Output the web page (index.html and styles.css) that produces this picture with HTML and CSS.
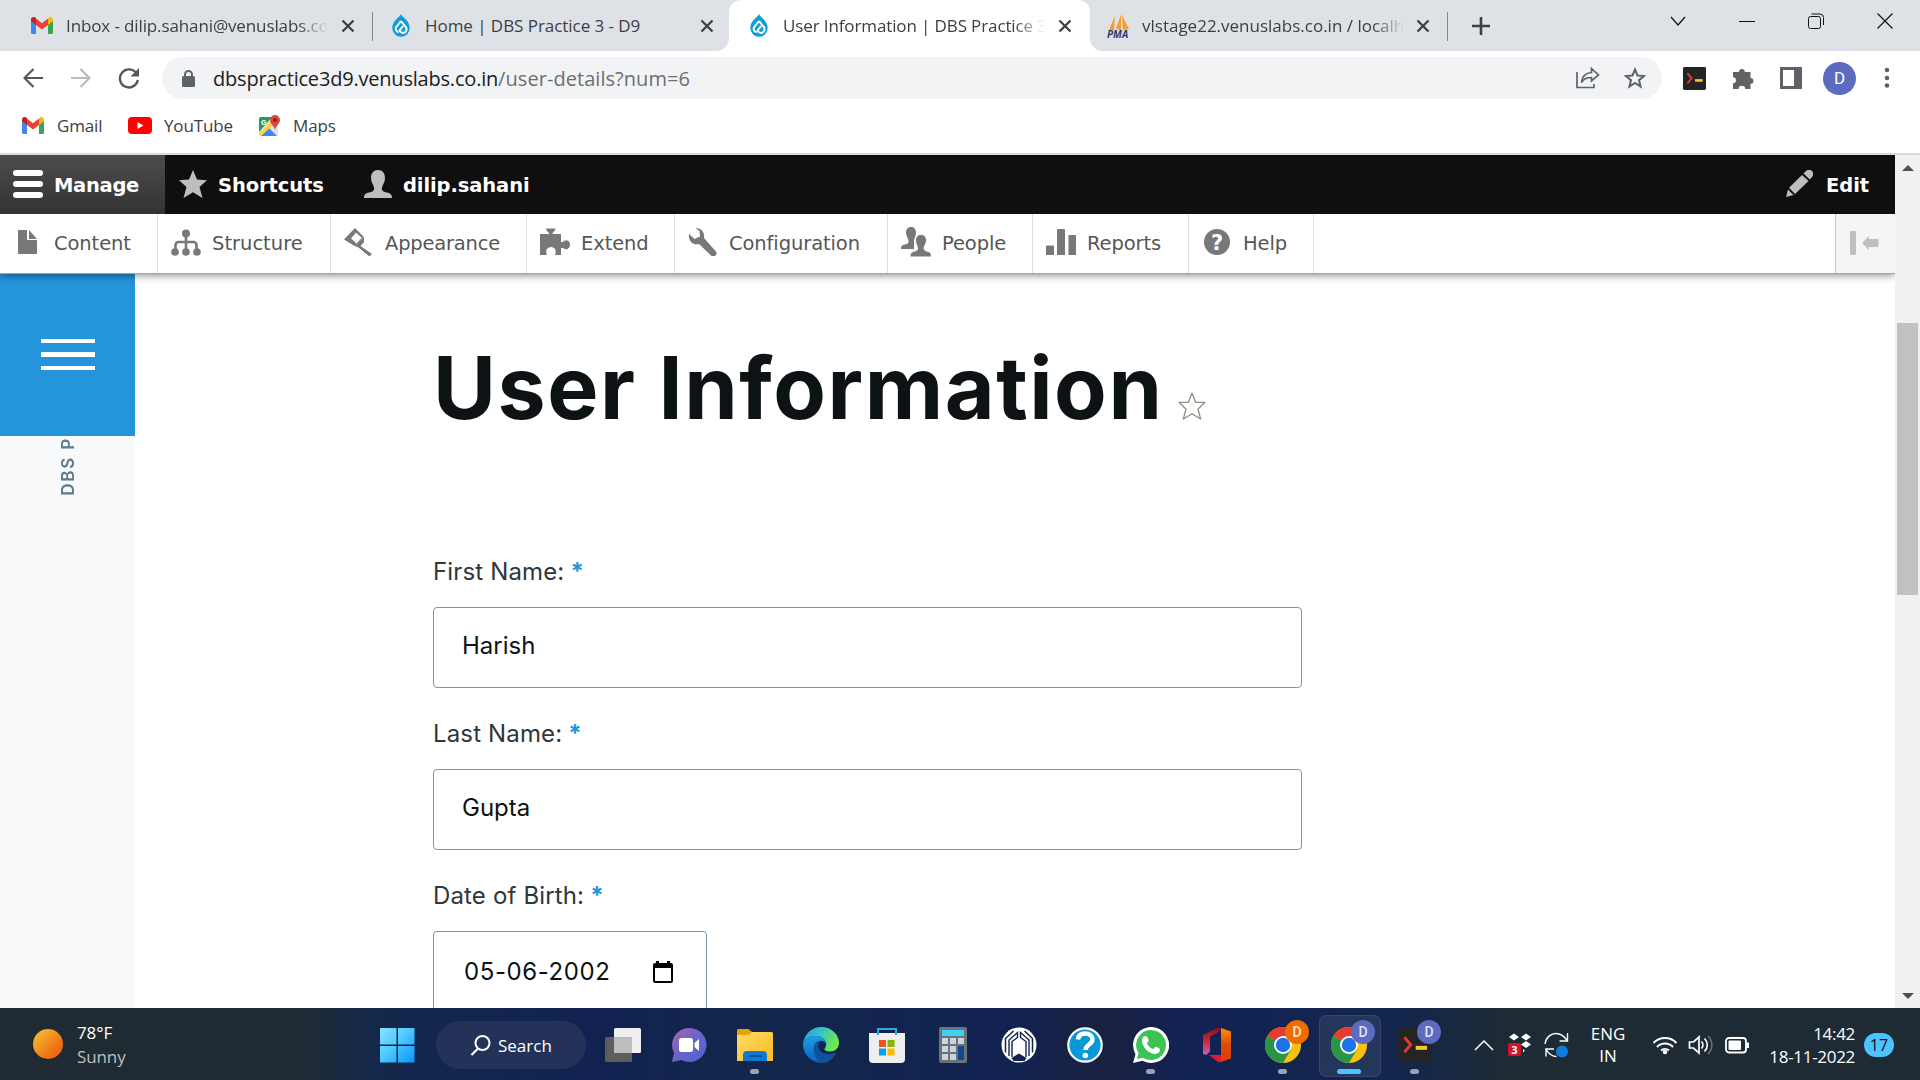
FILE: index.html
```html
<!DOCTYPE html>
<html lang="en">
<head>
<meta charset="utf-8">
<title>User Information | DBS Practice 3 - D9</title>
<link rel="stylesheet" href="styles.css">
</head>
<body>
<svg class="defs" width="0" height="0" aria-hidden="true">
  <defs>
    <linearGradient id="gSun" x1="0" y1="0" x2="1" y2="1"><stop offset=".1" stop-color="#f3ba32"/><stop offset=".75" stop-color="#ef6c10"/></linearGradient>
    <linearGradient id="gWin" x1="0" y1="0" x2="1" y2="1"><stop offset="0" stop-color="#8be0ff"/><stop offset=".45" stop-color="#4fcbfd"/><stop offset="1" stop-color="#0a95f8"/></linearGradient>
    <linearGradient id="gChat" x1="0" y1="0" x2="1" y2="1"><stop offset="0" stop-color="#a168ae"/><stop offset=".5" stop-color="#6a64c8"/><stop offset="1" stop-color="#4b62d8"/></linearGradient>
    <linearGradient id="gFolder" x1="0" y1="0" x2="1" y2="1"><stop offset="0" stop-color="#ffd86b"/><stop offset="1" stop-color="#fbbc1c"/></linearGradient>
    <linearGradient id="gEdgeTop" x1="0" y1="0" x2="1" y2=".4"><stop offset="0" stop-color="#1f9ddb"/><stop offset=".5" stop-color="#35c3c9"/><stop offset="1" stop-color="#6bea4c"/></linearGradient>
    <linearGradient id="gEdge" x1="0" y1="0" x2="0" y2="1"><stop offset="0" stop-color="#1aa0e4"/><stop offset="1" stop-color="#0d5fbd"/></linearGradient>
    <linearGradient id="gOffR" x1="0" y1="0" x2="0" y2="1"><stop offset="0" stop-color="#fd8f0c"/><stop offset=".5" stop-color="#e04a05"/><stop offset="1" stop-color="#dd3c00"/></linearGradient>
    <linearGradient id="gOffL" x1="0" y1="0" x2="0" y2="1"><stop offset="0" stop-color="#8b0f14"/><stop offset=".5" stop-color="#d0293b"/><stop offset="1" stop-color="#b967b8"/></linearGradient>
    <symbol id="gmail" viewBox="0 0 22 17">
      <path d="M0 3v12.500a1.500 1.500 0 0 0 1.500 1.500H5V7z" fill="#4285f4"/>
      <path d="M22 3v12.500a1.500 1.500 0 0 1-1.500 1.500H17V7z" fill="#34a853"/>
      <path d="M17 2v6l5-4V2.600C22 .2 19.300-.8 17.500.6z" fill="#fbbc04"/>
      <path d="M5 8V1.600l6 4.700 6-4.700V8l-6 4.600z" fill="#ea4335"/>
      <path d="M0 2.600V4l5 4V1.600L4.500.6C2.700-.8 0 .2 0 2.600z" fill="#c5221f"/>
    </symbol>
    <symbol id="drop" viewBox="0 0 18 23">
      <path d="M9 0c1 3.200 8.700 6.500 8.700 14A8.700 8.700 0 0 1 .3 14C.3 6.500 8 3.200 9 0z" fill="#0d9ddb"/>
      <path d="M9 7l4.600 5.800a3.600 3.600 0 1 1-6 3.700L11 12 M9 7l-4.600 5.800a3.400 3.400 0 0 0 2.300 5.500" fill="none" stroke="#fff" stroke-width="2"/>
    </symbol>
    <symbol id="x" viewBox="0 0 14 14"><path d="M1.500 1.500l11 11m0-11l-11 11" stroke="#3c4043" stroke-width="2.300"/></symbol>
    <symbol id="chrome" viewBox="0 0 36 36">
      <circle cx="18" cy="18" r="18" fill="#fcc10f"/>
      <path d="M18 18L2.400 9A18 18 0 0 1 33.600 9H18z" fill="#e53b30"/>
      <path d="M2.400 9A18 18 0 0 0 18 36l8-13.500L18 18z" fill="#2b9547"/>
      <circle cx="18" cy="18" r="9" fill="#fff"/><circle cx="18" cy="18" r="7.200" fill="#1c73e8"/>
    </symbol>
    <symbol id="term" viewBox="0 0 24 24">
      <rect width="24" height="24" rx="1.500" fill="#242424"/>
      <path d="M4.500 6.500l4.500 5.300-4.500 5.300" fill="none" stroke="#e23b2e" stroke-width="2"/><path d="M12.500 14h8" stroke="#f7c62d" stroke-width="2.800"/>
    </symbol>
  </defs>
</svg>

<header class="browser">
  <div class="tabs">
    <div class="tab tab-1"><svg class="fav" width="22" height="17"><use href="#gmail"/></svg><span class="tab-title fade">Inbox - dilip.sahani@venuslabs.co.in</span><svg class="tab-x" width="14" height="14"><use href="#x"/></svg></div>
    <div class="tab tab-2"><svg class="fav" width="18" height="23"><use href="#drop"/></svg><span class="tab-title">Home | DBS Practice 3 - D9</span><svg class="tab-x" width="14" height="14"><use href="#x"/></svg></div>
    <div class="tab tab-3"><svg class="fav" width="18" height="23"><use href="#drop"/></svg><span class="tab-title fade">User Information | DBS Practice 3 - D9</span><svg class="tab-x" width="14" height="14"><use href="#x"/></svg></div>
    <div class="tab tab-4"><svg class="fav" width="24" height="24" viewBox="0 0 24 24"><path d="M8 2L2 16h5zM14 0L9 15l5 1zM15 1l7 14-6 1z" fill="#f89c2b"/><text x="0" y="23.500" class="pma">PMA</text></svg><span class="tab-title fade">vlstage22.venuslabs.co.in / localhost</span><svg class="tab-x" width="14" height="14"><use href="#x"/></svg></div>
    <svg class="plus" width="18" height="18"><path d="M9 0v18M0 9h18" stroke="#3c4043" stroke-width="2.600"/></svg>
    <div class="win">
      <svg width="16" height="16"><path d="M1 4l7 8 7-8" fill="none" stroke="#111" stroke-width="1.200"/></svg>
      <svg width="16" height="16"><path d="M0 8.500h16" stroke="#111"/></svg>
      <svg width="16" height="16"><rect x=".5" y="3.500" width="12" height="12" rx="2" fill="none" stroke="#111"/><path d="M3.500 1h8.500a3.500 3.500 0 0 1 3.500 3.500V12" fill="none" stroke="#111"/></svg>
      <svg width="16" height="16"><path d="M.5.5l15 15m0-15l-15 15" stroke="#111" stroke-width="1.200"/></svg>
    </div>
  </div>
  <div class="nav">
    <svg class="back" width="20" height="20"><path d="M20 10H2M10.500 1L1.500 10l9 9" fill="none" stroke="#54585d" stroke-width="2.200"/></svg>
    <svg class="fwd" width="20" height="20"><path d="M0 10h18M9.500 1l9 9-9 9" fill="none" stroke="#b9bbbe" stroke-width="2.200"/></svg>
    <svg class="reload" width="22" height="22"><path d="M18.500 6.500A9 9 0 1 0 19.800 13" fill="none" stroke="#54585d" stroke-width="2.400"/><path d="M21 1v8.500h-8.500z" fill="#54585d"/></svg>
    <div class="omni">
      <svg width="13" height="17"><rect y="6" width="13" height="11" rx="1.500" fill="#5f6368"/><path d="M3 7V4.500a3.500 3.500 0 0 1 7 0V7" fill="none" stroke="#5f6368" stroke-width="2"/></svg>
      <span class="url"><b>dbspractice3d9.venuslabs.co.in</b><i>/user-details?num=6</i></span>
      <svg class="share" width="24" height="22"><path d="M1 5v15.500h17V17" fill="none" stroke="#5f6368" stroke-width="1.700"/><path d="M15.500 1.500l7 6.500-7 6V10.500c-5 0-8 1.500-10 5 .5-5.500 4-9.500 10-10z" fill="none" stroke="#5f6368" stroke-width="1.700"/></svg>
      <svg width="22" height="22" viewBox="0 0 22 22"><path d="M11 2.500l2.500 6 6.500.500-5 4.200 1.600 6.300L11 16l-5.600 3.500L7 13.200 2 9l6.500-.5z" fill="none" stroke="#5f6368" stroke-width="2"/></svg>
    </div>
    <svg class="ext" width="23" height="23"><use href="#term"/></svg>
    <svg class="puzzle" width="22" height="22"><path d="M0 5h6a2.900 2.900 0 1 1 5.800 0h5.700v6a2.900 2.900 0 1 1 0 5.800V22h-5.300a3.300 3.300 0 0 0-6.600 0H0v-5.800a3 3 0 0 0 0-6z" fill="#5f6368"/></svg>
    <svg class="panel" width="22" height="22"><path d="M0 0h22v22H0zM3 3v16h11V3z" fill="#5f6368" fill-rule="evenodd"/></svg>
    <span class="avatar">D</span>
    <svg class="dots" width="6" height="22"><circle cx="3" cy="3" r="2.300" fill="#5f6368"/><circle cx="3" cy="11" r="2.300" fill="#5f6368"/><circle cx="3" cy="18.500" r="2.300" fill="#5f6368"/></svg>
  </div>
  <div class="marks">
    <svg width="22" height="17"><use href="#gmail"/></svg><span class="mk mk-1">Gmail</span>
    <svg width="24" height="17"><rect width="24" height="17" rx="4" fill="#f00"/><path d="M9.500 5l6 3.500-6 3.500z" fill="#fff"/></svg><span class="mk mk-2">YouTube</span>
    <svg width="24" height="24" viewBox="0 0 24 24"><rect x="1" y="3" width="19" height="19" rx="2" fill="#dfe3e8"/><path d="M3 3h11L1 18V5a2 2 0 0 1 2-2z" fill="#1e9e58"/><path d="M3 22l8-8 8 8z" fill="#4285f4"/><path d="M1 20L15 5l3 3L3 22z" fill="#fdd23e"/><text x="3" y="11" class="g">G</text><path d="M17 1a5 5 0 0 1 5 5c0 4-4 5-5 10-1-5-5-6-5-10a5 5 0 0 1 5-5z" fill="#e04438"/><circle cx="17" cy="6" r="1.800" fill="#7c1f17"/></svg><span class="mk mk-3">Maps</span>
  </div>
</header>

<div class="view">
  <div class="page">
    <nav class="bar">
      <a class="bar-item manage"><svg width="30" height="28"><rect width="30" height="6" rx="3" fill="#fff"/><rect y="11" width="30" height="6" rx="3" fill="#fff"/><rect y="22" width="30" height="6" rx="3" fill="#fff"/></svg><span>Manage</span></a>
      <a class="bar-item shortcuts"><svg width="28" height="28"><path d="M14 0l4 9.500 10 .8-7.500 6.700L23.500 28 14 22.300 4.500 28l3-11L0 10.300l10-.8z" fill="#bebebe"/></svg><span>Shortcuts</span></a>
      <a class="bar-item user"><svg width="28" height="28"><path d="M14 0c4.500 0 7 3 7 8 0 4-2 6-3 9.500-.6 3 1 4.300 5 5 3.500.8 5 2 5 5.500H0c0-3.500 1.500-4.700 5-5.500 4-.7 5.600-2 5-5C9 14 7 12 7 8c0-5 2.500-8 7-8z" fill="#bebebe"/></svg><span>dilip.sahani</span></a>
      <a class="bar-item edit"><svg width="28" height="28"><path d="M1 27l2-7.500L8.500 25zM4 17.800L17 5l6.500 6L10 24zM18.500 3.500L21 1a4 4 0 0 1 6 6l-2.200 2.500z" fill="#bebebe"/></svg><span>Edit</span></a>
    </nav>
    <nav class="tray">
      <a class="ti w1"><svg width="30" height="28" viewBox="0 0 30 28"><path d="M5 2h9v10h10v14H5zM16 2l8 9h-8z" fill="#787878"/></svg><span>Content</span></a>
      <a class="ti w2"><svg width="30" height="28" viewBox="0 0 30 28"><path d="M15 7v16M4.500 22v-5a3 3 0 0 1 3-3h15a3 3 0 0 1 3 3v5" fill="none" stroke="#787878" stroke-width="2.600"/><circle cx="15" cy="5.500" r="4" fill="#787878"/><circle cx="4" cy="24" r="3.800" fill="#787878"/><circle cx="15" cy="24" r="3.800" fill="#787878"/><circle cx="26" cy="24" r="3.800" fill="#787878"/></svg><span>Structure</span></a>
      <a class="ti w3"><svg width="30" height="28" viewBox="0 0 30 28"><path d="M11 0l8.500 8.500-9 9.500L0 11.500zM12 4.500L7 10.500l5.500 5 5-6z" fill="#787878" fill-rule="evenodd"/><path d="M10.500 18l9.500-9.500V14l-3.500 4 11.500 8-2.500 2.500L14.500 19.500z" fill="#787878"/></svg><span>Appearance</span></a>
      <a class="ti w4"><svg width="30" height="28" viewBox="0 0 30 28"><path d="M0 6h9V5C7.500 3.500 6 2 6 .5h9.500C15.500 2 14 3.500 12.500 5v1H21v8h2c1-2 6-3 7 2 0 6-5 6-7 4h-2v7h-6c2-4 0-8-4-8s-6 4-4 8H0z" fill="#787878"/></svg><span>Extend</span></a>
      <a class="ti w5"><svg width="30" height="28" viewBox="0 0 30 28"><path d="M7.500 0C13 0 17 4 16 10l11.500 13a3 3 0 0 1-4.500 4.500L11 16C5 17.500 0 12.500 1 6l5.500 5L12 8.500 11.500 3z" fill="#787878"/></svg><span>Configuration</span></a>
      <a class="ti w6"><svg width="30" height="30" viewBox="0 0 30 30"><path d="M10 0c3.500 0 5 2.500 5 6 0 3-2 5-2 8v8H0c0-3 1-4 4-4.500 3-.6 4-1.500 3.500-4C7 11 5 9 5 6c0-3.500 1.500-6 5-6z" fill="#787878"/><path d="M20 7.500c3.500 0 5.500 2.500 5.500 6 0 3-2 4.500-2.500 7.500 0 2.500 2 3 4 3.500 2.500.5 3.500 2 3.500 5.500H9c0-3.500 1-5 3.500-5.500 2-.5 4.500-1 4-3.500-.5-3-2-4.500-2-7.500 0-3.500 2-6 5.500-6z" fill="#787878" stroke="#fff"/></svg><span>People</span></a>
      <a class="ti w7"><svg width="30" height="28" viewBox="0 0 30 28"><path d="M0 18.500a1 1 0 0 1 1-1h6a1 1 0 0 1 1 1V27H0zM11 2a1 1 0 0 1 1-1h6a1 1 0 0 1 1 1v25h-8zM22.500 8a1 1 0 0 1 1-1h5.500a1 1 0 0 1 1 1v19h-7.500z" fill="#787878"/></svg><span>Reports</span></a>
      <a class="ti w8"><svg width="30" height="28" viewBox="0 0 30 28"><circle cx="15" cy="14" r="13" fill="#787878"/><text x="15" y="22" class="q">?</text></svg><span>Help</span></a>
      <a class="orient"><svg width="29" height="24"><rect y="0" width="6" height="24" rx="1" fill="#c0c0c0"/><path d="M12 12l7-7v3h9.500v8H19v3z" fill="#c0c0c0"/></svg></a>
    </nav>
    <div class="body">
      <aside class="side">
        <div class="burger"><i></i><i></i><i></i></div>
        <div class="brand">DBS P</div>
      </aside>
      <main class="main">
        <div class="head"><h1>User Information</h1><svg width="28" height="28" viewBox="0 0 28 28"><path d="M14 1l3.600 9.300H27l-7 6.700 2.600 10L14 21.700 5.400 27 8 17l-7-6.700h9.400z" fill="#fff" stroke="#8f8f7c" stroke-width="1.300" stroke-linejoin="round"/></svg></div>
        <form class="form">
          <label>First Name:<em>*</em></label><div class="field"><span>Harish</span></div>
          <label>Last Name:<em>*</em></label><div class="field"><span>Gupta</span></div>
          <label>Date of Birth:<em>*</em></label><div class="field date"><span class="dt">05-06-2002</span><svg width="20" height="22"><path d="M3 0h3v2h8V0h3v2h1a2 2 0 0 1 2 2v16a2 2 0 0 1-2 2H2a2 2 0 0 1-2-2V4a2 2 0 0 1 2-2h1zM2 7v13h16V7z" fill="#000" fill-rule="evenodd"/></svg></div>
        </form>
      </main>
    </div>
  </div>
  <div class="scroll"><i class="up"></i><div class="thumb"></div><i class="down"></i></div>
</div>

<footer class="taskbar">
  <svg class="sun" width="30" height="30"><circle cx="15" cy="15" r="15" fill="url(#gSun)"/></svg>
  <div class="weather"><span>78°F</span><span class="dim">Sunny</span></div>
  <svg class="start" width="36" height="36"><path d="M1 1h16.500v16.500H1zM19 1h16.500v16.500H19zM1 19h16.500v16.500H1zM19 19h16.500v16.500H19z" fill="url(#gWin)"/></svg>
  <div class="search"><svg width="21" height="21"><circle cx="12.500" cy="8" r="7" fill="none" stroke="#fff" stroke-width="2"/><path d="M8 13.500L1.500 20" stroke="#fff" stroke-width="2.200"/></svg><span>Search</span></div>
  <div class="apps">
    <div class="app"><svg width="36" height="36"><rect x="0" y="10" width="27" height="25" rx="1.500" fill="#5d5d5d"/><rect x="9" y="1" width="27" height="25" rx="1.500" fill="#efefef"/><path d="M9 10h18v16H9z" fill="#bdbdbd"/></svg></div>
    <div class="app"><svg width="36" height="36"><path d="M18 1a17 17 0 1 1-7.500 32L1 35l2-9A17 17 0 0 1 18 1z" fill="url(#gChat)"/><rect x="8" y="11" width="14" height="14" rx="2.500" fill="#fff"/><path d="M23.500 16l4.500-4v12l-4.500-4z" fill="#fff"/></svg></div>
    <div class="app"><svg width="36" height="36"><path d="M0 3.500A1.500 1.500 0 0 1 1.500 2h10l3.500 3h19a2 2 0 0 1 2 2v8H0z" fill="#e6a209"/><path d="M0 8h12l3-3h19a2 2 0 0 1 2 2v27H0z" fill="url(#gFolder)"/><path d="M6 34v-6a4 4 0 0 1 4-4h16a4 4 0 0 1 4 4v6z" fill="#0f78d0"/><path d="M11 29h14" stroke="#0a4f9b" stroke-width="2"/></svg><i class="run"></i></div>
    <div class="app"><svg width="36" height="36"><path d="M0 17C1 7 9 0 18 0c11 0 18 8 18 15.500 0 6-4 9-9 9-3.500 0-5.500-1.200-5.500-2.500 0-1 1.700-2 1.700-5C23 12 18 9 12.500 9 5 9 1 13 0 17z" fill="url(#gEdgeTop)"/><path d="M0 17C1 12 6 9 12.500 9 19 9 23 13 23 17c-1-3-4-4-6.500-3-5 2-6 9-3 14 2 4 6 7 10 7.500C12 38 0 30 0 17z" fill="url(#gEdge)"/><path d="M11 19c1-4 4-5.500 6-5-4 5-1 13 9 13 4 0 6-1.500 7.500-1.500C30 32 25 36 19 36c-6-3-9.500-10-8-17z" fill="#11519d"/></svg></div>
    <div class="app"><svg width="36" height="36"><path d="M0 6h36v26a4 4 0 0 1-4 4H4a4 4 0 0 1-4-4z" fill="#eee"/><path d="M9 8V2h18v6" fill="none" stroke="#2ca8df" stroke-width="2"/><path d="M10 13h7v7h-7z" fill="#f25022"/><path d="M18.500 13h7v7h-7z" fill="#7fba00"/><path d="M10 21.500h7v7h-7z" fill="#00a4ef"/><path d="M18.500 21.500h7v7h-7z" fill="#ffb900"/></svg></div>
    <div class="app"><svg width="36" height="36"><rect x="4" width="28" height="36" rx="2" fill="#69737c"/><rect x="7" y="3" width="22" height="6" fill="#3fd0f7"/><path d="M7 11h6v6H7zM15 11h6v6h-6zM23 11h6v6h-6zM7 19h6v6H7zM15 19h6v6h-6zM7 27h6v6H7zM15 27h6v6h-6z" fill="#cdd3da"/><path d="M23 19h6v14h-6z" fill="#124a88"/></svg></div>
    <div class="app"><svg width="36" height="36"><circle cx="18" cy="18" r="17.500" fill="#fff"/><path d="M4.500 25.500V11.500L12.500 4M31.500 25.500V11.500L23.500 4" fill="none" stroke="#13234d" stroke-width="1.500"/><path d="M11 30V14.500l5.500-4V5.500L8 13v16M25 30V14.500l-5.500-4V5.500L28 13v16" fill="none" stroke="#13234d" stroke-width="1.400"/><path d="M10.500 31L18 26.500l7.500 4.500-2 3h-11z" fill="#13234d"/></svg></div>
    <div class="app"><svg width="36" height="36"><circle cx="18" cy="18" r="16.700" fill="#0798d8" stroke="#fff" stroke-width="2.200"/><path d="M11 12.500C11.500 8 14.500 6.500 18 6.500c4.500 0 7.500 2.500 7.500 6 0 5-7 5-7 10.500" fill="none" stroke="#fff" stroke-width="4.500"/><circle cx="18.300" cy="28.500" r="2.800" fill="#fff"/></svg></div>
    <div class="app"><svg width="36" height="36"><path d="M18 0a18 18 0 1 1-8.500 33.800L0 36l2.500-9A18 18 0 0 1 18 0z" fill="#fff"/><path d="M18 3a15 15 0 1 1-8 27.700L4 32l1.500-6A15 15 0 0 1 18 3z" fill="#3cc353"/><path d="M12 9c2 0 2.500 1 3.500 4 .5 1.500-1.500 2.500-1.500 3.500 1.500 3 3.500 4.500 6 5.500 1 0 2-2.500 3-2.200 2 .7 4 1.700 4 2.700 0 3-3 4.500-5 4.500C16 27 9 20 9 13.500 9 11 10.500 9 12 9z" fill="#fff"/></svg><i class="run"></i></div>
    <div class="app"><svg width="36" height="36"><path d="M4 8L18 1h5l-5 5-7 3.500v15L7 28l-3-1z" fill="url(#gOffL)"/><path d="M22 1l10 3.500v27L22 35z" fill="url(#gOffR)"/><path d="M10 28h12v7h-3z" fill="#d91c38"/></svg></div>
    <div class="app"><svg width="36" height="36"><use href="#chrome"/></svg><b class="who orange">D</b><i class="run"></i></div>
    <div class="app active"><svg width="36" height="36"><use href="#chrome"/></svg><b class="who">D</b><i class="run on"></i></div>
    <div class="app"><svg width="34" height="34"><use href="#term"/></svg><b class="who">D</b><i class="run"></i></div>
  </div>
  <div class="sys">
    <svg class="s1" width="20" height="12"><path d="M1 11l9-9 9 9" fill="none" stroke="#fff" stroke-width="1.500"/></svg>
    <svg class="s2" width="24" height="24"><path d="M1 4l5-3.500L11 4 6 7.500zM13 4l5-3.500L23 4l-5 3.500zM13 11.500L18 8l5 3.500-5 3.500zM15 16l2 1.500-2 2z" fill="#fff"/><rect y="10" width="13" height="13" rx="2" fill="#d3132b"/><text x="3.300" y="20.800" class="n3">3</text></svg>
    <svg class="s3" width="25" height="26"><path d="M1 12C2 5 7 1.500 12 1.500c4.500 0 8 2.500 10.500 6.500M23.500 1v8h-8M2 24.500V17h8M2.500 18c3 5 6 6.500 10 6.500" fill="none" stroke="#fff" stroke-width="1.400"/><circle cx="18" cy="19.500" r="6" fill="#0f7ddb"/></svg>
    <div class="lang"><span>ENG</span><span>IN</span></div>
    <svg class="s4" width="26" height="20"><g fill="none" stroke="#fff" stroke-width="2"><path d="M1.500 8a16 16 0 0 1 23 0M5 12a11 11 0 0 1 16 0M9 15.500a6 6 0 0 1 8 0"/></g><circle cx="13" cy="17" r="2.300" fill="#fff"/></svg>
    <svg class="s5" width="26" height="20"><path d="M1.500 7h4L11 2v16l-5.500-5h-4z" fill="none" stroke="#fff" stroke-width="1.700"/><path d="M13.500 6.500a5 5 0 0 1 0 7M16.500 3.500a9 9 0 0 1 0 13" fill="none" stroke="#fff" stroke-width="1.700"/><path d="M20 1a12.500 12.500 0 0 1 0 18" fill="none" stroke="#66707a" stroke-width="1.500"/></svg>
    <svg class="s6" width="25" height="17"><rect x="1" y="1" width="20" height="14.500" rx="3" fill="none" stroke="#fff" stroke-width="1.800"/><rect x="3.500" y="3.500" width="12.500" height="9.500" rx="1" fill="#fff"/><path d="M22.500 5.500v5.500" stroke="#fff" stroke-width="3"/></svg>
    <div class="clock"><span>14:42</span><span>18-11-2022</span></div>
    <span class="notif">17</span>
  </div>
</footer>
</body>
</html>
```
FILE: styles.css
```css
* { box-sizing: border-box; }
body { margin: 0; width: 1920px; height: 1080px; overflow: hidden; background: #fff; font-family: "Open Sans", "Noto Sans", sans-serif; display: flex; flex-direction: column; }
svg { display: block; flex: none; }
.defs { position: absolute; }
i, em { font-style: normal; }

/* browser frame */
.browser { height: 155px; flex: none; border-bottom: 2px solid #dadada; }
.tabs { height: 51px; background: #dee1e6; display: flex; align-items: center; color: #3c4043; }
.tab { height: 51px; display: flex; align-items: center; position: relative; flex: none; }
.fav { flex: none; }
.tab-title { font-size: 17px; letter-spacing: -0.12px; white-space: nowrap; overflow: hidden; line-height: 30px; width: 262px; }
.fade { -webkit-mask-image: linear-gradient(90deg, #000 88%, transparent); mask-image: linear-gradient(90deg, #000 88%, transparent); }
.tab-x { margin-left: 13px; }
.tab-1 { width: 373px; padding-left: 31px; }
.tab-1::after, .tab-4::after { content: ""; position: absolute; right: 0; top: 12px; width: 1.500px; height: 29px; background: #84888d; }
.tab-1 .tab-title { margin-left: 13px; }
.tab-2 { width: 356px; padding-left: 19px; }
.tab-2 .tab-title { margin-left: 15px; letter-spacing: -0.05px; }
.tab-3 { width: 361px; padding-left: 21px; background: #fff; border-radius: 12px 12px 0 0; }
.tab-3::before, .tab-3::after { content: ""; position: absolute; bottom: 0; width: 12px; height: 12px; }
.tab-3::before { left: -12px; background: radial-gradient(circle at 0 0, transparent 11.500px, #fff 12px); }
.tab-3::after { right: -12px; background: radial-gradient(circle at 100% 0, transparent 11.500px, #fff 12px); }
.tab-3 .tab-title { margin-left: 15px; }
.tab-4 { width: 358px; padding-left: 17px; }
.tab-4 .tab-title { margin-left: 11px; letter-spacing: 0; }
.tab-4 .tab-x { margin-left: 12px; }
.pma { font: italic bold 10px "Open Sans", sans-serif; fill: #35356b; }
.plus { margin-left: 24px; }
.win { margin: 0 27px 9px auto; display: flex; gap: 53px; }
.nav { height: 54px; display: flex; align-items: center; }
.back { margin-left: 23px; }
.fwd { margin-left: 28px; }
.reload { margin-left: 27px; }
.omni { margin-left: 22px; width: 1500px; height: 42px; border-radius: 21px; background: #f1f3f4; display: flex; align-items: center; padding: 0 16px 0 20px; }
.url { margin-left: 18px; font-size: 20px; line-height: 30px; white-space: nowrap; padding-top: 1px; }
.url b { font-weight: 400; color: #202124; letter-spacing: -0.2px; }
.url i { color: #6b6f74; letter-spacing: 0.05px; }
.share { margin: 0 24px 0 auto; }
.ext { margin-left: 21px; }
.puzzle { margin-left: 27px; }
.panel { margin-left: 25px; }
.avatar { margin-left: 21px; width: 33px; height: 33px; border-radius: 50%; background: #5c6bc0; color: #fff; font: 17px/33px Roboto, sans-serif; text-align: center; }
.dots { margin-left: 28px; }
.marks { height: 41px; display: flex; align-items: center; padding-left: 22px; color: #3c4043; font-size: 17px; letter-spacing: -0.15px; }
.mk { margin-left: 13px; white-space: nowrap; padding-bottom: 1px; }
.mk-1 { width: 71px; }
.mk-2 { margin-left: 12px; width: 94px; }
.mk-3 { margin-left: 11px; }
.g { font: bold 8px Roboto, sans-serif; fill: #fff; }

/* viewport */
.view { height: 853px; flex: none; display: flex; overflow: hidden; }
.page { width: 1895px; display: flex; flex-direction: column; }
.bar { height: 59px; flex: none; background: #0f0f0f; display: flex; color: #fff; font: bold 19.500px "DejaVu Sans", Verdana, sans-serif; letter-spacing: -0.1px; }
.bar-item { display: flex; align-items: center; white-space: nowrap; padding-bottom: 1px; }
.bar-item span { margin-left: 11px; padding-top: 2px; }
.manage { width: 165px; padding-left: 13px; background: linear-gradient(#4c4c4c, #333); letter-spacing: -0.3px; }
.shortcuts { width: 185px; padding-left: 14px; }
.user { padding-left: 14px; }
.edit { margin-left: auto; padding-right: 26px; }
.edit span { margin-left: 13px; }
.tray { height: 60px; flex: none; background: #fff; display: flex; color: #565656; font: 19.500px "DejaVu Sans", Verdana, sans-serif; letter-spacing: -0.1px; border-bottom: 1px solid #a6a6a6; box-shadow: 0 0 9px rgba(0,0,0,.6); position: relative; z-index: 2; clip-path: inset(0 0 -14px 0); }
.ti { display: flex; align-items: center; border-right: 1px solid #ddd; padding: 0 0 3px 13px; white-space: nowrap; }
.ti span { margin-left: 11px; padding-top: 2px; }
.w1 { width: 158px; }
.w2 { width: 173px; letter-spacing: 0; }
.w3 { width: 196px; letter-spacing: -0.2px; }
.w4 { width: 148px; }
.w5 { width: 213px; }
.w6 { width: 145px; }
.w7 { width: 156px; }
.w8 { width: 125px; }
.q { font: bold 21px "DejaVu Sans", sans-serif; fill: #fff; text-anchor: middle; }
.orient { margin-left: auto; width: 60px; background: #f5f5f5; border-left: 1px solid #c5c5c5; display: flex; align-items: center; padding: 0 0 2px 14px; }
.body { flex: 1; display: flex; }
.side { width: 135px; background: #f7f9fa; display: flex; flex-direction: column; align-items: center; }
.burger { width: 135px; height: 162px; background: #2494db; display: flex; flex-direction: column; align-items: center; gap: 9px; padding-top: 65px; }
.burger i { width: 54px; height: 4px; background: #fff; }
.burger i:nth-child(2) { height: 5px; }
.brand { margin-top: 1px; writing-mode: vertical-rl; transform: rotate(180deg); font: 600 17px/20px Inter, sans-serif; letter-spacing: 1.800px; color: #5c7b8f; white-space: nowrap; }
.main { padding-left: 298px; }
.head { height: 266px; display: flex; align-items: flex-start; padding-top: 62px; }
.head svg { margin: 56px 0 0 15px; }
h1 { margin: 0; font: 700 86px/104px Inter, sans-serif; letter-spacing: 1.550px; color: #0d1214; white-space: nowrap; }
.form { font: 24px/36px Inter, sans-serif; }
label { display: block; height: 67px; padding-top: 14px; color: #313637; white-space: nowrap; letter-spacing: 0.150px; }
label em { color: #2494db; font-weight: 700; margin-left: 6px; }
.field { width: 869px; height: 81px; border: 1px solid #7e96a7; border-radius: 4px; padding-left: 28px; display: flex; align-items: center; color: #0d1214; margin-bottom: 14px; padding-bottom: 3px; }
.date { width: 274px; justify-content: space-between; padding: 0 33px 0 30px; }
.dt { letter-spacing: 0.600px; }
.scroll { width: 25px; background: #f1f1f1; display: flex; flex-direction: column; align-items: center; padding: 10px 0 9px; }
.up, .down { border: 6px solid transparent; }
.up { border-top: 0; border-bottom-color: #505050; }
.down { border-bottom: 0; border-top-color: #505050; margin-top: auto; }
.thumb { width: 21px; height: 272px; margin-top: 152px; background: #c1c1c1; }

/* taskbar */
.taskbar { height: 72px; flex: none; display: flex; align-items: center; color: #fff; background: linear-gradient(90deg, #1f2a33 0, #202b34 300px, #13284a 370px, #112251 600px, #13274b 760px, #112251 1000px, #1a2140 1110px, #112254 1190px, #13264c 1400px, #1e2b35 1500px); font-size: 17px; }
.sun { margin-left: 33px; }
.weather { margin-left: 14px; width: 100px; padding-top: 2px; display: flex; flex-direction: column; line-height: 24px; letter-spacing: -0.1px; }
.dim { color: #bcc0c4; }
.start { margin-left: 202px; margin-top: 2px; }
.search { margin: 2px 0 0 21px; width: 150px; height: 48px; border-radius: 24px; background: #24325a; display: flex; align-items: center; padding-left: 34px; }
.search span { margin-left: 7px; }
.apps { display: flex; margin-left: 4px; }
.app { width: 66px; height: 72px; display: flex; align-items: center; justify-content: center; position: relative; padding-top: 2px; }
.active::before { content: ""; position: absolute; left: 3px; top: 7px; width: 60px; height: 60px; border-radius: 7px; background: rgba(255,255,255,.08); border: 1px solid rgba(255,255,255,.08); }
.active svg { position: relative; }
.run { position: absolute; left: 28px; bottom: 6px; width: 9px; height: 5px; border-radius: 3px; background: #9aa1b1; }
.run.on { left: 21px; width: 24px; background: #4cc2ff; }
.who { position: absolute; left: 35px; top: 12px; width: 24px; height: 24px; border-radius: 50%; background: #5c6bc0; font: 500 14px/24px Roboto, sans-serif; text-align: center; color: #dfe3f6; }
.orange { background: #ef6c00; color: #ffe1c8; }
.sys { display: flex; align-items: center; flex: 1; padding: 2px 0 0 26px; }
.s2 { margin-left: 14px; }
.n3 { font: bold 11px "Open Sans", sans-serif; fill: #fff; }
.s3 { margin-left: 12px; }
.lang { margin-left: 12px; width: 54px; display: flex; flex-direction: column; align-items: center; line-height: 22px; }
.s4 { margin-left: 17px; }
.s5 { margin-left: 10px; }
.s6 { margin-left: 11px; }
.clock { width: 105px; display: flex; flex-direction: column; align-items: flex-end; line-height: 23px; letter-spacing: -0.3px; }
.notif { margin-left: 9px; width: 30px; height: 24px; border-radius: 12px; background: #4cc2ff; color: #111; font-size: 16px; line-height: 24px; text-align: center; }
```
